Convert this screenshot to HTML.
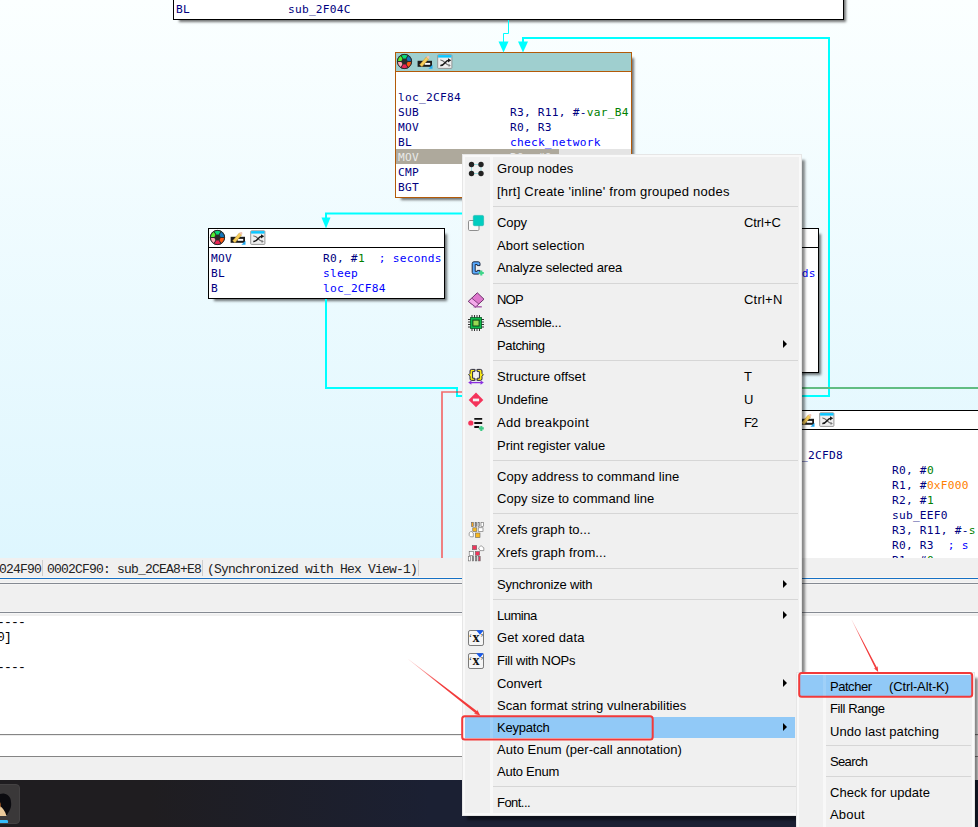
<!DOCTYPE html><html><head><meta charset="utf-8"><title>IDA - Keypatch</title><style>
*{box-sizing:border-box}
html,body{margin:0;padding:0}
body{width:978px;height:827px;overflow:hidden;position:relative;background:#f0f0f0;font-family:"Liberation Sans",sans-serif}
#graph{position:absolute;left:0;top:0;width:978px;height:558px;overflow:hidden;background:linear-gradient(to bottom,#fbffff 0,#def6fe 558px)}
.blk{position:absolute;border:1px solid #000;background:#fff;box-shadow:4px 4px 2.5px -2px rgba(0,0,0,.55)}
.blk.sel{border-color:#b35a08}
.hd{height:19px;border-bottom:1px solid #000;position:relative;background:#fff}
.sel .hd{background:#9fcfcf;border-bottom-color:#b35a08}
.hi{position:absolute;left:0;top:0}
.cd{padding:3px 0 1px 2px;font:11.2px/15px "DejaVu Sans Mono","Liberation Mono",monospace;letter-spacing:.258px;color:#000080;white-space:pre}
.cd div{height:15px}
.b{color:#0000ff}.g{color:#008000}.o{color:#ff8000}
.selrow{position:relative;color:#e9e9e9}
#edges{position:absolute;left:0;top:0}
#sb{position:absolute;left:0;top:558px;width:978px;height:20px;background:#f0f0f0;font:13px/15px "Liberation Mono",monospace;letter-spacing:-.8px;color:#222;white-space:pre}
#sb span{position:absolute;top:4px}
#sb i{position:absolute;top:2px;width:1px;height:16px;background:#cfcfcf}
.ln{position:absolute;left:0;width:978px;height:1px}
#out{position:absolute;left:0;top:616px;width:978px;height:118px;background:#fff;font:13px/15px "Liberation Mono",monospace;letter-spacing:-.8px;color:#000;white-space:pre}
#out span{position:absolute}
#cli{position:absolute;left:0;top:735px;width:978px;height:21px;background:#fff}
#tb{position:absolute;left:0;top:780px;width:978px;height:47px;background:linear-gradient(to right,#1f1d20 0,#1f1d20 150px,#1b2033 430px,#1b2033 100%)}
#tbi{position:absolute;left:-6px;top:4px;width:26px;height:40px;border-radius:4px;background:#3a3839;border:1px solid #444243;overflow:hidden}
.menu{position:absolute;background:#f0f0f0;border:3px solid #f9f9f9;outline:1px solid #e6e6e6;outline-offset:-1px;box-shadow:4px 5px 2.5px -1px rgba(0,0,0,.47);font:13px/16px "Liberation Sans",sans-serif;color:#000}
.menu .gut{position:absolute;top:0;bottom:0;width:2px;background:#f8f8f8}
.menu .gut2{position:absolute;background:rgba(255,255,255,.13);width:3px}
.mi{position:absolute;white-space:pre;height:16px}
.sep{position:absolute;height:1px;background:#d6d6d6}
.hl{position:absolute;background:#91c9f7}
.arr{position:absolute;width:0;height:0;border-top:4px solid transparent;border-bottom:4px solid transparent;border-left:4.5px solid #000}
.ic{position:absolute}
#anno{position:absolute;left:0;top:0}
</style></head><body>
<div id="graph">
<div class="blk" style="left:173px;top:-51px;width:671px;height:71px"><div class="hd"><svg class="hi" width="60" height="18" viewBox="0 0 60 18">
<circle cx="8.5" cy="8.5" r="7.5" fill="#2a2a2a"/>
<path d="M8.5 8.5 L5 2.45 A7 7 0 0 1 12 2.45Z" fill="#08dc78"/>
<path d="M8.5 8.5 L12 2.45 A7 7 0 0 1 15.5 8.5Z" fill="#1276bc"/>
<path d="M8.5 8.5 L15.5 8.5 A7 7 0 0 1 12 14.55Z" fill="#ff5812"/>
<path d="M8.5 8.5 L12 14.55 A7 7 0 0 1 5 14.55Z" fill="#ee2456"/>
<path d="M8.5 8.5 L5 14.55 A7 7 0 0 1 1.5 8.5Z" fill="#ffa8b4"/>
<path d="M8.5 8.5 L1.5 8.5 A7 7 0 0 1 5 2.45Z" fill="#56f030"/>
<g stroke="#2a2a2a" stroke-width="1"><path d="M8.5 8.5L5 2.45M8.5 8.5L12 2.45M8.5 8.5L15.5 8.5M8.5 8.5L12 14.55M8.5 8.5L5 14.55M8.5 8.5L1.5 8.5"/></g>
<circle cx="8.5" cy="8.5" r="3" fill="#2a2a2a"/>
<circle cx="8.5" cy="8.5" r="7.1" fill="none" stroke="#2a2a2a" stroke-width="1"/>
<rect x="21.6" y="7.8" width="14.4" height="6" fill="#1c1c1c"/>
<rect x="28.6" y="9.9" width="5.6" height="1.9" fill="#fff"/>
<path d="M23.7 11.8 L30.3 4 L32.6 5.9 L26 13.7 Z" fill="#f6cd5a" stroke="#b98f2e" stroke-width=".5"/>
<path d="M30.3 4 Q32 2.2 33.1 3.3 Q34 4.5 32.6 5.9 Z" fill="#f3c4b4"/>
<path d="M36.5 11.8 L36.5 15.7 L32.4 15.7 Z" fill="#1fa8ee"/>
<rect x="41.7" y="1.8" width="14.2" height="13.6" rx=".8" fill="#efefef" stroke="#8c8c8c" stroke-width=".9"/>
<rect x="42.1" y="2.1" width="13.4" height="2.5" fill="#0cc6ff"/>
<path d="M44.3 7 C48.5 6.6 49.5 12.6 53.6 12.4" fill="none" stroke="#666" stroke-width="1.1"/>
<path d="M44.3 12.4 C49 12.8 49 7 53 7.2" fill="none" stroke="#1a1a1a" stroke-width="1.5"/>
<path d="M52 5.2 L55.2 7.3 L52 9.4 Z" fill="#1a1a1a"/>
<path d="M52.6 10.9 L54.8 12.4 L52.6 13.9 Z" fill="#777"/>
</svg></div><div class="cd"><div>MOV             R0, R3</div><div>BL              <span class="b">puts</span></div><div>BL              sub_2F04C</div></div></div>
<div class="blk" style="left:582px;top:228px;width:237px;height:145px"><div class="hd"><svg class="hi" width="60" height="18" viewBox="0 0 60 18">
<circle cx="8.5" cy="8.5" r="7.5" fill="#2a2a2a"/>
<path d="M8.5 8.5 L5 2.45 A7 7 0 0 1 12 2.45Z" fill="#08dc78"/>
<path d="M8.5 8.5 L12 2.45 A7 7 0 0 1 15.5 8.5Z" fill="#1276bc"/>
<path d="M8.5 8.5 L15.5 8.5 A7 7 0 0 1 12 14.55Z" fill="#ff5812"/>
<path d="M8.5 8.5 L12 14.55 A7 7 0 0 1 5 14.55Z" fill="#ee2456"/>
<path d="M8.5 8.5 L5 14.55 A7 7 0 0 1 1.5 8.5Z" fill="#ffa8b4"/>
<path d="M8.5 8.5 L1.5 8.5 A7 7 0 0 1 5 2.45Z" fill="#56f030"/>
<g stroke="#2a2a2a" stroke-width="1"><path d="M8.5 8.5L5 2.45M8.5 8.5L12 2.45M8.5 8.5L15.5 8.5M8.5 8.5L12 14.55M8.5 8.5L5 14.55M8.5 8.5L1.5 8.5"/></g>
<circle cx="8.5" cy="8.5" r="3" fill="#2a2a2a"/>
<circle cx="8.5" cy="8.5" r="7.1" fill="none" stroke="#2a2a2a" stroke-width="1"/>
<rect x="21.6" y="7.8" width="14.4" height="6" fill="#1c1c1c"/>
<rect x="28.6" y="9.9" width="5.6" height="1.9" fill="#fff"/>
<path d="M23.7 11.8 L30.3 4 L32.6 5.9 L26 13.7 Z" fill="#f6cd5a" stroke="#b98f2e" stroke-width=".5"/>
<path d="M30.3 4 Q32 2.2 33.1 3.3 Q34 4.5 32.6 5.9 Z" fill="#f3c4b4"/>
<path d="M36.5 11.8 L36.5 15.7 L32.4 15.7 Z" fill="#1fa8ee"/>
<rect x="41.7" y="1.8" width="14.2" height="13.6" rx=".8" fill="#efefef" stroke="#8c8c8c" stroke-width=".9"/>
<rect x="42.1" y="2.1" width="13.4" height="2.5" fill="#0cc6ff"/>
<path d="M44.3 7 C48.5 6.6 49.5 12.6 53.6 12.4" fill="none" stroke="#666" stroke-width="1.1"/>
<path d="M44.3 12.4 C49 12.8 49 7 53 7.2" fill="none" stroke="#1a1a1a" stroke-width="1.5"/>
<path d="M52 5.2 L55.2 7.3 L52 9.4 Z" fill="#1a1a1a"/>
<path d="M52.6 10.9 L54.8 12.4 L52.6 13.9 Z" fill="#777"/>
</svg></div><div class="cd"><div></div><div>MOV             R0, #<span class="g">1</span><span class="b">  ; seconds</span></div><div>BL              <span class="b">sleep</span></div><div>LDR             R3, =<span class="b">unk_4A0F4</span></div><div>ADD             R3, R3, #<span class="g">1</span></div><div>STR             R3, [R11]</div><div>CMP             R3, #<span class="g">5</span></div><div>BLE             <span class="b">loc_2CF84</span></div></div></div>
<div class="blk sel" style="left:395px;top:52px;width:237px;height:146px"><div class="hd"><svg class="hi" width="60" height="18" viewBox="0 0 60 18">
<circle cx="8.5" cy="8.5" r="7.5" fill="#2a2a2a"/>
<path d="M8.5 8.5 L5 2.45 A7 7 0 0 1 12 2.45Z" fill="#08dc78"/>
<path d="M8.5 8.5 L12 2.45 A7 7 0 0 1 15.5 8.5Z" fill="#1276bc"/>
<path d="M8.5 8.5 L15.5 8.5 A7 7 0 0 1 12 14.55Z" fill="#ff5812"/>
<path d="M8.5 8.5 L12 14.55 A7 7 0 0 1 5 14.55Z" fill="#ee2456"/>
<path d="M8.5 8.5 L5 14.55 A7 7 0 0 1 1.5 8.5Z" fill="#ffa8b4"/>
<path d="M8.5 8.5 L1.5 8.5 A7 7 0 0 1 5 2.45Z" fill="#56f030"/>
<g stroke="#2a2a2a" stroke-width="1"><path d="M8.5 8.5L5 2.45M8.5 8.5L12 2.45M8.5 8.5L15.5 8.5M8.5 8.5L12 14.55M8.5 8.5L5 14.55M8.5 8.5L1.5 8.5"/></g>
<circle cx="8.5" cy="8.5" r="3" fill="#2a2a2a"/>
<circle cx="8.5" cy="8.5" r="7.1" fill="none" stroke="#2a2a2a" stroke-width="1"/>
<rect x="21.6" y="7.8" width="14.4" height="6" fill="#1c1c1c"/>
<rect x="28.6" y="9.9" width="5.6" height="1.9" fill="#fff"/>
<path d="M23.7 11.8 L30.3 4 L32.6 5.9 L26 13.7 Z" fill="#f6cd5a" stroke="#b98f2e" stroke-width=".5"/>
<path d="M30.3 4 Q32 2.2 33.1 3.3 Q34 4.5 32.6 5.9 Z" fill="#f3c4b4"/>
<path d="M36.5 11.8 L36.5 15.7 L32.4 15.7 Z" fill="#1fa8ee"/>
<rect x="41.7" y="1.8" width="14.2" height="13.6" rx=".8" fill="#efefef" stroke="#8c8c8c" stroke-width=".9"/>
<rect x="42.1" y="2.1" width="13.4" height="2.5" fill="#0cc6ff"/>
<path d="M44.3 7 C48.5 6.6 49.5 12.6 53.6 12.4" fill="none" stroke="#666" stroke-width="1.1"/>
<path d="M44.3 12.4 C49 12.8 49 7 53 7.2" fill="none" stroke="#1a1a1a" stroke-width="1.5"/>
<path d="M52 5.2 L55.2 7.3 L52 9.4 Z" fill="#1a1a1a"/>
<path d="M52.6 10.9 L54.8 12.4 L52.6 13.9 Z" fill="#777"/>
</svg></div><div class="cd"><div></div><div>loc_2CF84</div><div>SUB             R3, R11, #-<span class="g">var_B4</span></div><div>MOV             R0, R3</div><div>BL              <span class="b">check_network</span></div><div class="selrow"><span style="position:absolute;left:-2px;top:-1px;width:235px;height:15px;background:#e4e4e4"></span><span style="position:absolute;left:-2px;top:-1px;width:163px;height:15px;background:#aea99c"></span><span style="position:relative">MOV             R0, #0</span></div><div>CMP             R3, #<span class="g">0</span></div><div>BGT             <span class="b">loc_2CFD8</span></div></div></div>
<div class="blk" style="left:208px;top:228px;width:237px;height:71px"><div class="hd"><svg class="hi" width="60" height="18" viewBox="0 0 60 18">
<circle cx="8.5" cy="8.5" r="7.5" fill="#2a2a2a"/>
<path d="M8.5 8.5 L5 2.45 A7 7 0 0 1 12 2.45Z" fill="#08dc78"/>
<path d="M8.5 8.5 L12 2.45 A7 7 0 0 1 15.5 8.5Z" fill="#1276bc"/>
<path d="M8.5 8.5 L15.5 8.5 A7 7 0 0 1 12 14.55Z" fill="#ff5812"/>
<path d="M8.5 8.5 L12 14.55 A7 7 0 0 1 5 14.55Z" fill="#ee2456"/>
<path d="M8.5 8.5 L5 14.55 A7 7 0 0 1 1.5 8.5Z" fill="#ffa8b4"/>
<path d="M8.5 8.5 L1.5 8.5 A7 7 0 0 1 5 2.45Z" fill="#56f030"/>
<g stroke="#2a2a2a" stroke-width="1"><path d="M8.5 8.5L5 2.45M8.5 8.5L12 2.45M8.5 8.5L15.5 8.5M8.5 8.5L12 14.55M8.5 8.5L5 14.55M8.5 8.5L1.5 8.5"/></g>
<circle cx="8.5" cy="8.5" r="3" fill="#2a2a2a"/>
<circle cx="8.5" cy="8.5" r="7.1" fill="none" stroke="#2a2a2a" stroke-width="1"/>
<rect x="21.6" y="7.8" width="14.4" height="6" fill="#1c1c1c"/>
<rect x="28.6" y="9.9" width="5.6" height="1.9" fill="#fff"/>
<path d="M23.7 11.8 L30.3 4 L32.6 5.9 L26 13.7 Z" fill="#f6cd5a" stroke="#b98f2e" stroke-width=".5"/>
<path d="M30.3 4 Q32 2.2 33.1 3.3 Q34 4.5 32.6 5.9 Z" fill="#f3c4b4"/>
<path d="M36.5 11.8 L36.5 15.7 L32.4 15.7 Z" fill="#1fa8ee"/>
<rect x="41.7" y="1.8" width="14.2" height="13.6" rx=".8" fill="#efefef" stroke="#8c8c8c" stroke-width=".9"/>
<rect x="42.1" y="2.1" width="13.4" height="2.5" fill="#0cc6ff"/>
<path d="M44.3 7 C48.5 6.6 49.5 12.6 53.6 12.4" fill="none" stroke="#666" stroke-width="1.1"/>
<path d="M44.3 12.4 C49 12.8 49 7 53 7.2" fill="none" stroke="#1a1a1a" stroke-width="1.5"/>
<path d="M52 5.2 L55.2 7.3 L52 9.4 Z" fill="#1a1a1a"/>
<path d="M52.6 10.9 L54.8 12.4 L52.6 13.9 Z" fill="#777"/>
</svg></div><div class="cd"><div>MOV             R0, #<span class="g">1</span><span class="b">  ; seconds</span></div><div>BL              <span class="b">sleep</span></div><div>B               <span class="b">loc_2CF84</span></div></div></div>
<div class="blk" style="left:777px;top:410px;width:260px;height:200px"><div class="hd"><svg class="hi" width="60" height="18" viewBox="0 0 60 18">
<circle cx="8.5" cy="8.5" r="7.5" fill="#2a2a2a"/>
<path d="M8.5 8.5 L5 2.45 A7 7 0 0 1 12 2.45Z" fill="#08dc78"/>
<path d="M8.5 8.5 L12 2.45 A7 7 0 0 1 15.5 8.5Z" fill="#1276bc"/>
<path d="M8.5 8.5 L15.5 8.5 A7 7 0 0 1 12 14.55Z" fill="#ff5812"/>
<path d="M8.5 8.5 L12 14.55 A7 7 0 0 1 5 14.55Z" fill="#ee2456"/>
<path d="M8.5 8.5 L5 14.55 A7 7 0 0 1 1.5 8.5Z" fill="#ffa8b4"/>
<path d="M8.5 8.5 L1.5 8.5 A7 7 0 0 1 5 2.45Z" fill="#56f030"/>
<g stroke="#2a2a2a" stroke-width="1"><path d="M8.5 8.5L5 2.45M8.5 8.5L12 2.45M8.5 8.5L15.5 8.5M8.5 8.5L12 14.55M8.5 8.5L5 14.55M8.5 8.5L1.5 8.5"/></g>
<circle cx="8.5" cy="8.5" r="3" fill="#2a2a2a"/>
<circle cx="8.5" cy="8.5" r="7.1" fill="none" stroke="#2a2a2a" stroke-width="1"/>
<rect x="21.6" y="7.8" width="14.4" height="6" fill="#1c1c1c"/>
<rect x="28.6" y="9.9" width="5.6" height="1.9" fill="#fff"/>
<path d="M23.7 11.8 L30.3 4 L32.6 5.9 L26 13.7 Z" fill="#f6cd5a" stroke="#b98f2e" stroke-width=".5"/>
<path d="M30.3 4 Q32 2.2 33.1 3.3 Q34 4.5 32.6 5.9 Z" fill="#f3c4b4"/>
<path d="M36.5 11.8 L36.5 15.7 L32.4 15.7 Z" fill="#1fa8ee"/>
<rect x="41.7" y="1.8" width="14.2" height="13.6" rx=".8" fill="#efefef" stroke="#8c8c8c" stroke-width=".9"/>
<rect x="42.1" y="2.1" width="13.4" height="2.5" fill="#0cc6ff"/>
<path d="M44.3 7 C48.5 6.6 49.5 12.6 53.6 12.4" fill="none" stroke="#666" stroke-width="1.1"/>
<path d="M44.3 12.4 C49 12.8 49 7 53 7.2" fill="none" stroke="#1a1a1a" stroke-width="1.5"/>
<path d="M52 5.2 L55.2 7.3 L52 9.4 Z" fill="#1a1a1a"/>
<path d="M52.6 10.9 L54.8 12.4 L52.6 13.9 Z" fill="#777"/>
</svg></div><div class="cd"><div></div><div>loc_2CFD8</div><div>MOV             R0, #<span class="g">0</span></div><div>MOV             R1, #<span class="o">0xF000</span></div><div>MOV             R2, #<span class="g">1</span></div><div>BL              sub_EEF0</div><div>SUB             R3, R11, #-<span class="g">s</span></div><div>MOV             R0, R3<span class="b">  ; s</span></div><div>MOV             R1, #<span class="g">0</span></div><div>MOV             R2, #<span class="g">0x80</span></div></div></div>
<svg id="edges" width="978" height="558" viewBox="0 0 978 558">
<g fill="none" stroke="#00ffff">
<path d="M508.5 20 V33.5 H503.5 V43" stroke-width="1"/>
<path d="M523 43 V38 H829 V396 H800" stroke-width="2"/>
<path d="M462 213.5 H326 V218" stroke-width="2"/>
<path d="M326 299 V388 H457 V396 H463" stroke-width="2"/>
</g>
<g fill="#00ffff">
<path d="M498.5 41.5 H508.5 L503.5 52.5 Z"/>
<path d="M518 41.5 H528 L523 52.5 Z"/>
<path d="M321.5 217.5 H330.5 L326 228.5 Z"/>
</g>
<path d="M463 392 H442 V558" fill="none" stroke="#f26c6c" stroke-width="1.7"/>
<rect x="456" y="391" width="2" height="2" fill="#6f8f8f"/>
<path d="M800 388 H978" stroke="#62bd82" stroke-width="2" fill="none"/>
</svg>
</div>
<div id="sb"><span style="left:-15px">00024F90</span><i style="left:42px"></i><span style="left:47px">0002CF90: sub_2CEA8+E8</span><i style="left:202px"></i><span style="left:207px">(Synchronized with Hex View-1)</span><i style="left:418px"></i></div>
<div class="ln" style="top:577px;background:#f8f6f3"></div><div class="ln" style="top:578px;background:#1670c4"></div><div class="ln" style="top:579px;background:#f8f6f3"></div>
<div class="ln" style="top:582px;background:#f5f5f5"></div><div class="ln" style="top:583px;background:#858a92"></div><div class="ln" style="top:584px;background:#f5f5f5"></div>
<div class="ln" style="top:611px;background:#f5f5f5"></div><div class="ln" style="top:612px;background:#858a92"></div><div class="ln" style="top:613px;background:#f6f6f6"></div>
<div id="out"><span style="left:-3px;top:-1px">----</span><span style="left:-3px;top:14px">0]</span><span style="left:-3px;top:44px">----</span></div>
<div class="ln" style="top:734px;background:#858585"></div><div id="cli"></div><div class="ln" style="top:735px;background:#ececec"></div>
<div class="ln" style="top:756px;background:#858585"></div>
<div id="tb"><div id="tbi"><svg width="26" height="40" viewBox="0 0 26 40" style="position:absolute;left:-1px;top:-1px"><path d="M6 10 C12 8 17 12 17 18 C18 24 15 27 13 31 L6 31 Z" fill="#0b0b0f"/><path d="M6 22 C9 24 11 27 12.5 32 L6 32 Z" fill="#e9c99a"/><path d="M6 18 C7 20 7 22 6 24 Z" fill="#b5652a"/><rect x="0" y="36" width="14" height="3.4" rx="1.2" fill="#35bdfb"/></svg></div></div>
<div class="menu" id="m1" style="left:462px;top:154px;width:340px;height:662px">
<div class="gut" style="left:25px;width:3px"></div>
<div class="hl" style="left:0;top:560px;width:330px;height:21px"></div>
<div class="gut2" style="left:25px;top:559px;height:22px"></div>
<div class="mi" style="left:32px;top:4px;letter-spacing:0.113px">Group nodes</div>
<div class="mi" style="left:32px;top:27px;letter-spacing:0.217px">[hrt] Create 'inline' from grouped nodes</div>
<div class="sep" style="left:28px;top:49px;width:305px"></div>
<div class="mi" style="left:32px;top:58px;letter-spacing:-0.12px">Copy</div>
<div class="mi" style="left:279px;top:58px;letter-spacing:-0.081px">Ctrl+C</div>
<div class="mi" style="left:32px;top:81px;letter-spacing:0.1px">Abort selection</div>
<div class="mi" style="left:32px;top:103px;letter-spacing:-0.131px">Analyze selected area</div>
<div class="sep" style="left:28px;top:126px;width:305px"></div>
<div class="mi" style="left:32px;top:135px;letter-spacing:-0.786px">NOP</div>
<div class="mi" style="left:279px;top:135px;letter-spacing:0.219px">Ctrl+N</div>
<div class="mi" style="left:32px;top:158px;letter-spacing:-0.342px">Assemble...</div>
<div class="mi" style="left:32px;top:181px;letter-spacing:-0.371px">Patching</div>
<div class="arr" style="left:318px;top:183px"></div>
<div class="sep" style="left:28px;top:203px;width:305px"></div>
<div class="mi" style="left:32px;top:212px;letter-spacing:0.039px">Structure offset</div>
<div class="mi" style="left:279px;top:212px">T</div>
<div class="mi" style="left:32px;top:235px;letter-spacing:-0.107px">Undefine</div>
<div class="mi" style="left:279px;top:235px">U</div>
<div class="mi" style="left:32px;top:258px;letter-spacing:0.334px">Add breakpoint</div>
<div class="mi" style="left:279px;top:258px;letter-spacing:-0.972px">F2</div>
<div class="mi" style="left:32px;top:281px;letter-spacing:-0.005px">Print register value</div>
<div class="sep" style="left:28px;top:303px;width:305px"></div>
<div class="mi" style="left:32px;top:312px;letter-spacing:0.115px">Copy address to command line</div>
<div class="mi" style="left:32px;top:334px;letter-spacing:0.051px">Copy size to command line</div>
<div class="sep" style="left:28px;top:356px;width:305px"></div>
<div class="mi" style="left:32px;top:365px;letter-spacing:0.069px">Xrefs graph to...</div>
<div class="mi" style="left:32px;top:388px;letter-spacing:0.097px">Xrefs graph from...</div>
<div class="sep" style="left:28px;top:411px;width:305px"></div>
<div class="mi" style="left:32px;top:420px;letter-spacing:-0.185px">Synchronize with</div>
<div class="arr" style="left:318px;top:423px"></div>
<div class="sep" style="left:28px;top:442px;width:305px"></div>
<div class="mi" style="left:32px;top:451px;letter-spacing:-0.488px">Lumina</div>
<div class="arr" style="left:318px;top:454px"></div>
<div class="mi" style="left:32px;top:473px;letter-spacing:0.108px">Get xored data</div>
<div class="mi" style="left:32px;top:496px;letter-spacing:-0.24px">Fill with NOPs</div>
<div class="mi" style="left:32px;top:519px;letter-spacing:-0.089px">Convert</div>
<div class="arr" style="left:318px;top:522px"></div>
<div class="mi" style="left:32px;top:541px;letter-spacing:0.044px">Scan format string vulnerabilities</div>
<div class="mi" style="left:32px;top:563px;letter-spacing:-0.2px">Keypatch</div>
<div class="arr" style="left:318px;top:566px"></div>
<div class="mi" style="left:32px;top:585px;letter-spacing:0.045px">Auto Enum (per-call annotation)</div>
<div class="mi" style="left:32px;top:607px;letter-spacing:-0.254px">Auto Enum</div>
<div class="sep" style="left:28px;top:629px;width:305px"></div>
<div class="mi" style="left:32px;top:638px;letter-spacing:-0.543px">Font...</div>
</div>
<svg id="icons" width="978" height="827" viewBox="0 0 978 827" style="position:absolute;left:0;top:0">
<g stroke="#9fdfe0" stroke-width="1" fill="none"><path d="M471.5 164.5 H481 V173.5 H471.5 Z"/></g>
<g fill="#222"><circle cx="471.5" cy="164.5" r="2.7"/><circle cx="481" cy="164.5" r="2.7"/><circle cx="471.5" cy="173.5" r="2.7"/><circle cx="481" cy="173.5" r="2.7"/></g>
<rect x="468.5" y="220.5" width="10.5" height="10" rx="1.2" fill="#fafafa" stroke="#8e8e8e"/>
<rect x="473.3" y="215.4" width="10.3" height="10.3" rx="1.3" fill="#00cdc0" stroke="#19b5ab" stroke-width=".6"/>
<path d="M480 265.6 V263.6 Q480 261.8 478.2 261.8 H474 Q472.2 261.8 472.2 263.6 V272.3 Q472.2 274.1 474 274.1 H478.2 Q480 274.1 480 272.3 V270.4 H477.2 V271.4 H475.2 V264.5 H477.2 V265.6 Z" fill="#5aabff" stroke="#1c2a44" stroke-width="1" stroke-linejoin="round"/>
<path d="M478.8 273 H483.8 M481.3 270.5 V275.5" stroke="#3fd68a" stroke-width="2.1" fill="none"/>
<path d="M477.3 292.8 L484 299.2 L475.6 307 L468.3 301.4 Z" fill="#de78cd" stroke="#6e336c" stroke-width="1" stroke-linejoin="round"/>
<path d="M471.8 298.2 L478.8 304 L475.6 307 L468.3 301.4 Z" fill="#f4aaeb" stroke="#6e336c" stroke-width=".8" stroke-linejoin="round"/>
<path d="M473.6 306.8 H481.8" stroke="#a858a8" stroke-width="1.4"/>
<g stroke="#333" stroke-width="1"><path d="M472 315v3M474.5 315v3M477 315v3M479.5 315v3M472 328v3M474.5 328v3M477 328v3M479.5 328v3M468 319.5h3M468 322h3M468 324.5h3M468 327h3M481 319.5h3M481 322h3M481 324.5h3M481 327h3"/></g>
<rect x="470.4" y="317.6" width="11.2" height="10.8" fill="#0cb94a" stroke="#0b5a23" stroke-width=".8"/>
<rect x="472.9" y="320.1" width="6.2" height="5.9" fill="#9ad852" stroke="#0f3315" stroke-width=".9"/>
<rect x="475.2" y="369.2" width="1.6" height="11.4" fill="#aaa"/>
<rect x="472.9" y="371.9" width="6.2" height="5.9" fill="#f0f0f0" stroke="#fff" stroke-width="1.3"/>
<g fill="#f7e81a" stroke="#14143a" stroke-width=".9" stroke-linejoin="round"><path d="M474.8 369.4 H471.6 Q470 369.4 470 371 V373.4 L468.6 374.8 L470 376.2 V378.8 Q470 380.4 471.6 380.4 H474.8 V378.2 H472.6 V371.6 H474.8 Z"/><path d="M477.2 369.4 H480.4 Q482 369.4 482 371 V373.4 L483.4 374.8 L482 376.2 V378.8 Q482 380.4 480.4 380.4 H477.2 V378.2 H479.4 V371.6 H477.2 Z"/></g>
<path d="M470 382.6 H482" stroke="#8a2ee0" stroke-width="1.3"/><path d="M468.2 382.6 L471.4 380.4 V384.8 Z M483.8 382.6 L480.6 380.4 V384.8 Z" fill="#8a2ee0"/>
<path d="M476 392.6 L483.3 399.9 L476 407.2 L468.7 399.9 Z" fill="#f4335a"/><rect x="472.9" y="398.6" width="6.2" height="2.7" fill="#f2f2f2"/>
<circle cx="470.8" cy="423" r="2.6" fill="#f4335a"/><path d="M474.3 418.9 H482.2 M474.3 423 H482.2 M474.3 427 H479.2" stroke="#111" stroke-width="1.8"/>
<path d="M478.8 428.4 H483.8 M481.3 425.9 V430.9" stroke="#3fca86" stroke-width="2.1" fill="none"/>
<g stroke="#666" stroke-width=".6">
<rect x="471.6" y="522.3" width="1.7" height="4.3" fill="#f5a21d"/><rect x="475.1" y="522.3" width="1.4" height="4.3" fill="#888"/><rect x="478" y="522.3" width="1.5" height="4.3" fill="#ddd"/><rect x="481" y="522.3" width="2.5" height="4.3" fill="#fff"/>
<rect x="472.8" y="527.8" width="4" height="3.7" fill="#f8b820"/><rect x="478.2" y="527.8" width="4.8" height="3.8" fill="#fff"/>
<rect x="475.4" y="533" width="4.6" height="4.5" fill="#f8b820"/><path d="M469.2 533 L471 531.2 L473.3 533 V536.8 H470.5 L469.2 535.4 Z" fill="#fff"/>
<rect x="472.3" y="545.5" width="4.4" height="4.2" fill="#f4335a"/><path d="M478.5 548 L481 545.6 L483.8 547.8 V550.6 H480 Z" fill="#fff"/>
<rect x="469.2" y="551.5" width="4.4" height="3.8" fill="#fff"/><rect x="475.3" y="551.5" width="4.3" height="3.8" fill="#f4335a"/>
<rect x="468.3" y="556.3" width="2" height="4.6" fill="#fff"/><rect x="472.3" y="556.3" width="1.3" height="4.6" fill="#999"/><rect x="475.6" y="556.3" width="1.3" height="4.6" fill="#888"/><rect x="478.6" y="556.3" width="1.6" height="4.6" fill="#f4335a"/>
</g>
<rect x="468.5" y="630.5" width="15" height="15" rx="1.6" fill="#f5f5f5" stroke="#7a7a7a"/>
<path d="M476.1 630.2 H483.7 L480 634.8 Z" fill="#1458ee"/>
<text x="476" y="641.5" text-anchor="middle" font-family="Liberation Serif,serif" font-weight="bold" font-size="14" fill="#111">x</text>
<text x="470.4" y="641.0" text-anchor="middle" font-family="Liberation Serif,serif" font-size="10" fill="#222">‘</text><text x="481.8" y="641.0" text-anchor="middle" font-family="Liberation Serif,serif" font-size="10" fill="#222">’</text>
<rect x="468.5" y="653.5" width="15" height="15" rx="1.6" fill="#f5f5f5" stroke="#7a7a7a"/>
<path d="M476.1 653.2 H483.7 L480 657.8 Z" fill="#1458ee"/>
<text x="476" y="664.5" text-anchor="middle" font-family="Liberation Serif,serif" font-weight="bold" font-size="14" fill="#111">x</text>
<text x="470.4" y="664.0" text-anchor="middle" font-family="Liberation Serif,serif" font-size="10" fill="#222">‘</text><text x="481.8" y="664.0" text-anchor="middle" font-family="Liberation Serif,serif" font-size="10" fill="#222">’</text>
</svg>
<div class="menu" id="m2" style="left:796px;top:672px;width:179px;height:170px">
<div class="gut" style="left:24px;width:3px"></div>
<div class="hl" style="left:0;top:0;width:173px;height:21px"></div>
<div class="gut2" style="left:24px;top:0;height:21px"></div>
<div class="mi" style="left:31px;top:4px;letter-spacing:-0.469px">Patcher</div>
<div class="mi" style="left:90px;top:4px;letter-spacing:-0.126px">(Ctrl-Alt-K)</div>
<div class="mi" style="left:31px;top:26px;letter-spacing:-0.392px">Fill Range</div>
<div class="mi" style="left:31px;top:49px;letter-spacing:0.077px">Undo last patching</div>
<div class="sep" style="left:27px;top:70px;width:145px"></div>
<div class="mi" style="left:31px;top:79px;letter-spacing:-0.641px">Search</div>
<div class="sep" style="left:27px;top:101px;width:145px"></div>
<div class="mi" style="left:31px;top:110px;letter-spacing:0.066px">Check for update</div>
<div class="mi" style="left:31px;top:132px;letter-spacing:0.179px">About</div>
</div>
<svg id="anno" width="978" height="827" viewBox="0 0 978 827">
<defs><linearGradient id="fa" gradientUnits="userSpaceOnUse" x1="408" y1="659" x2="440" y2="684"><stop offset="0" stop-color="#f23c3c" stop-opacity=".15"/><stop offset="1" stop-color="#f23c3c"/></linearGradient>
<linearGradient id="fb" gradientUnits="userSpaceOnUse" x1="851" y1="619" x2="862" y2="640"><stop offset="0" stop-color="#f23c3c" stop-opacity=".15"/><stop offset="1" stop-color="#f23c3c"/></linearGradient></defs>
<rect x="462.2" y="716.2" width="190.5" height="23.4" rx="2.6" fill="none" stroke="#f23a3a" stroke-width="2"/>
<rect x="799.2" y="673.1" width="173" height="23.7" rx="2.6" fill="none" stroke="#f23a3a" stroke-width="2"/>
<polygon points="408.4,659.4 475.6,713.3 473.7,713.7 480.3,715.4 477.1,709.4 477.2,711.3 408.6,659.2" fill="url(#fa)"/>
<polygon points="851.6,619.9 875.4,668.4 873.6,667.9 878.2,672.0 877.6,665.9 876.9,667.6 851.8,619.7" fill="url(#fb)"/>
</svg>
</body></html>
